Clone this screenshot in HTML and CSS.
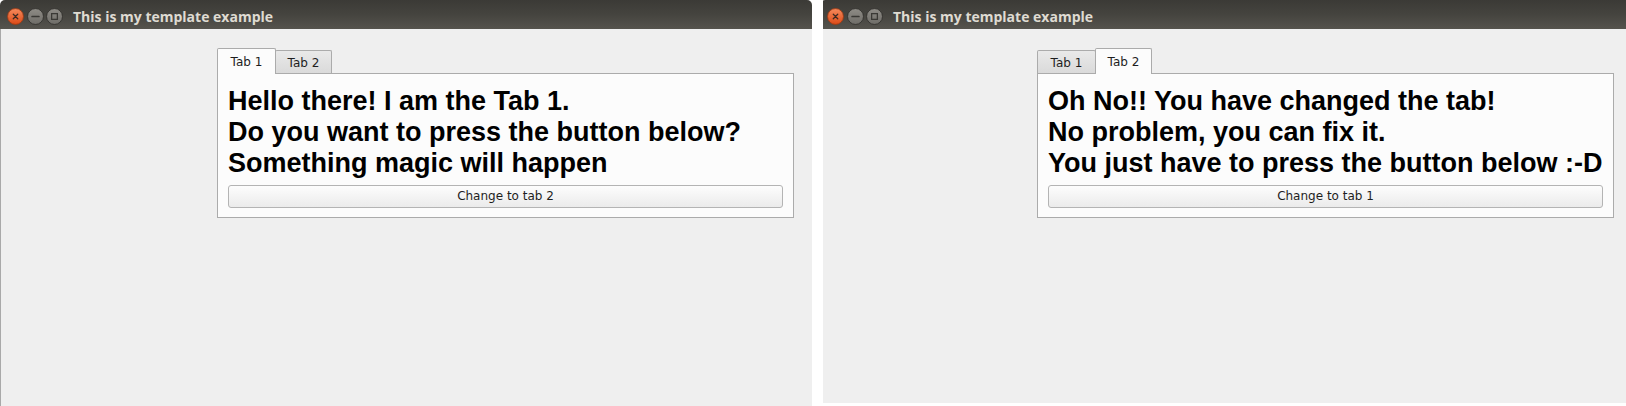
FILE: index.html
```html
<!DOCTYPE html>
<html>
<head>
<meta charset="utf-8">
<title>Template example</title>
<link rel="stylesheet" href="styles.css">
</head>
<body>
<div class="screen">
  <div class="shot shot-left">
    <div class="window">
      <div class="titlebar">
        <div class="controls">
          <svg class="ctl" width="17" height="17" viewBox="0 0 16 16">
            <defs><linearGradient id="gc1" x1="0" y1="0" x2="0" y2="1"><stop offset="0" stop-color="#f58a5c"/><stop offset="1" stop-color="#dd4a17"/></linearGradient></defs>
            <circle cx="8" cy="8" r="7.5" fill="url(#gc1)" stroke="#9c3a14" stroke-width="0.8"/>
            <path d="M5.9 5.9 L10.1 10.1 M10.1 5.9 L5.9 10.1" stroke="#3c2a22" stroke-width="1.2" stroke-linecap="round"/>
          </svg>
          <svg class="ctl" width="17" height="17" viewBox="0 0 16 16">
            <defs><linearGradient id="gm1" x1="0" y1="0" x2="0" y2="1"><stop offset="0" stop-color="#8e8c86"/><stop offset="1" stop-color="#6e6c67"/></linearGradient></defs>
            <circle cx="8" cy="8" r="7.5" fill="url(#gm1)" stroke="#2f2e2b" stroke-width="0.8"/>
            <path d="M4.8 8 L11.2 8" stroke="#3a3935" stroke-width="1.6" stroke-linecap="round"/>
          </svg>
          <svg class="ctl" width="17" height="17" viewBox="0 0 16 16">
            <defs><linearGradient id="gx1" x1="0" y1="0" x2="0" y2="1"><stop offset="0" stop-color="#8e8c86"/><stop offset="1" stop-color="#6e6c67"/></linearGradient></defs>
            <circle cx="8" cy="8" r="7.5" fill="url(#gx1)" stroke="#2f2e2b" stroke-width="0.8"/>
            <rect x="5.3" y="5.3" width="5.4" height="5.4" fill="none" stroke="#3a3935" stroke-width="1.2"/>
          </svg>
        </div>
        <span class="title">This is my template example</span>
      </div>
      <div class="client">
        <div class="tabwidget">
          <div class="tabbar">
            <div class="tab tab-first active">Tab 1</div>
            <div class="tab tab-second">Tab 2</div>
          </div>
          <div class="pane">
            <div class="message">Hello there! I am the Tab 1.<br>Do you want to press the button below?<br>Something magic will happen</div>
            <div class="button">Change to tab 2</div>
          </div>
        </div>
      </div>
    </div>
  </div>
  <div class="shot shot-right">
    <div class="window">
      <div class="titlebar">
        <div class="controls">
          <svg class="ctl" width="17" height="17" viewBox="0 0 16 16">
            <defs><linearGradient id="gc2" x1="0" y1="0" x2="0" y2="1"><stop offset="0" stop-color="#f58a5c"/><stop offset="1" stop-color="#dd4a17"/></linearGradient></defs>
            <circle cx="8" cy="8" r="7.5" fill="url(#gc2)" stroke="#9c3a14" stroke-width="0.8"/>
            <path d="M5.9 5.9 L10.1 10.1 M10.1 5.9 L5.9 10.1" stroke="#3c2a22" stroke-width="1.2" stroke-linecap="round"/>
          </svg>
          <svg class="ctl" width="17" height="17" viewBox="0 0 16 16">
            <defs><linearGradient id="gm2" x1="0" y1="0" x2="0" y2="1"><stop offset="0" stop-color="#8e8c86"/><stop offset="1" stop-color="#6e6c67"/></linearGradient></defs>
            <circle cx="8" cy="8" r="7.5" fill="url(#gm2)" stroke="#2f2e2b" stroke-width="0.8"/>
            <path d="M4.8 8 L11.2 8" stroke="#3a3935" stroke-width="1.6" stroke-linecap="round"/>
          </svg>
          <svg class="ctl" width="17" height="17" viewBox="0 0 16 16">
            <defs><linearGradient id="gx2" x1="0" y1="0" x2="0" y2="1"><stop offset="0" stop-color="#8e8c86"/><stop offset="1" stop-color="#6e6c67"/></linearGradient></defs>
            <circle cx="8" cy="8" r="7.5" fill="url(#gx2)" stroke="#2f2e2b" stroke-width="0.8"/>
            <rect x="5.3" y="5.3" width="5.4" height="5.4" fill="none" stroke="#3a3935" stroke-width="1.2"/>
          </svg>
        </div>
        <span class="title">This is my template example</span>
      </div>
      <div class="client">
        <div class="tabwidget">
          <div class="tabbar">
            <div class="tab tab-first">Tab 1</div>
            <div class="tab tab-second active">Tab 2</div>
          </div>
          <div class="pane">
            <div class="message">Oh No!! You have changed the tab!<br>No problem, you can fix it.<br>You just have to press the button below :-D</div>
            <div class="button">Change to tab 1</div>
          </div>
        </div>
      </div>
    </div>
  </div>
</div>
</body>
</html>
```

FILE: styles.css
```css
html, body {
  margin: 0;
  padding: 0;
  background: #ffffff;
}

body {
  width: 1626px;
  height: 406px;
  overflow: hidden;
}

.screen {
  display: flex;
  gap: 11px;
  align-items: flex-start;
}

.shot {
  overflow: hidden;
  flex: none;
}

.shot-left {
  width: 812px;
  height: 406px;
}

.shot-right {
  width: 803px;
  height: 403px;
}

.shot-right .window {
  margin-left: -3px;
}

.window {
  width: 812px;
  height: 406px;
  display: flex;
  flex-direction: column;
}

.titlebar {
  flex: none;
  height: 29px;
  box-sizing: border-box;
  padding: 3px 0 0 7px;
  display: flex;
  align-items: center;
  background: linear-gradient(to bottom, #3b3a36 0%, #45443f 50%, #55534d 100%);
  border-radius: 5px 5px 0 0;
}

.controls {
  display: flex;
  gap: 2.5px;
}

.ctl {
  display: block;
}

.title {
  margin-left: 10px;
  font-family: "Open Sans", "DejaVu Sans", sans-serif;
  font-weight: bold;
  font-size: 14px;
  color: #dfdbd2;
}

.client {
  flex: 1;
  background: #efefef;
  border-left: 1px solid #a9a9a9;
  padding: 19px 0 0 216px;
}

.tabwidget {
  width: 577px;
}

.tabbar {
  display: flex;
  align-items: flex-end;
  height: 25px;
}

.tab {
  box-sizing: border-box;
  font-family: "DejaVu Sans", sans-serif;
  font-size: 12px;
  line-height: 14px;
  color: #1e1e1e;
  text-align: center;
  border: 1px solid #ababab;
  border-bottom: none;
  border-radius: 2px 2px 0 0;
  padding-top: 5px;
  height: 23px;
  background: linear-gradient(to bottom, #e9e9e9, #dadada);
}

.tab-first {
  width: 59px;
}

.tab-second {
  width: 57px;
  margin-left: -1px;
}

.tab.active {
  height: 26px;
  padding-top: 6px;
  background: #fcfcfc;
  margin-bottom: -1px;
  position: relative;
  z-index: 1;
}

.pane {
  box-sizing: border-box;
  height: 145px;
  background: #fcfcfc;
  border: 1px solid #ababab;
  padding: 12px 10px 0 10px;
}

.message {
  font-family: "Liberation Sans", Arial, sans-serif;
  font-weight: bold;
  font-size: 27px;
  line-height: 31px;
  color: #000000;
  white-space: nowrap;
}

.button {
  margin-top: 6px;
  box-sizing: border-box;
  height: 23px;
  border: 1px solid #b4b4b4;
  border-radius: 3px;
  background: linear-gradient(to bottom, #fdfdfd, #ebebeb);
  font-family: "DejaVu Sans", sans-serif;
  font-size: 12px;
  line-height: 21px;
  color: #1e1e1e;
  text-align: center;
}
```
